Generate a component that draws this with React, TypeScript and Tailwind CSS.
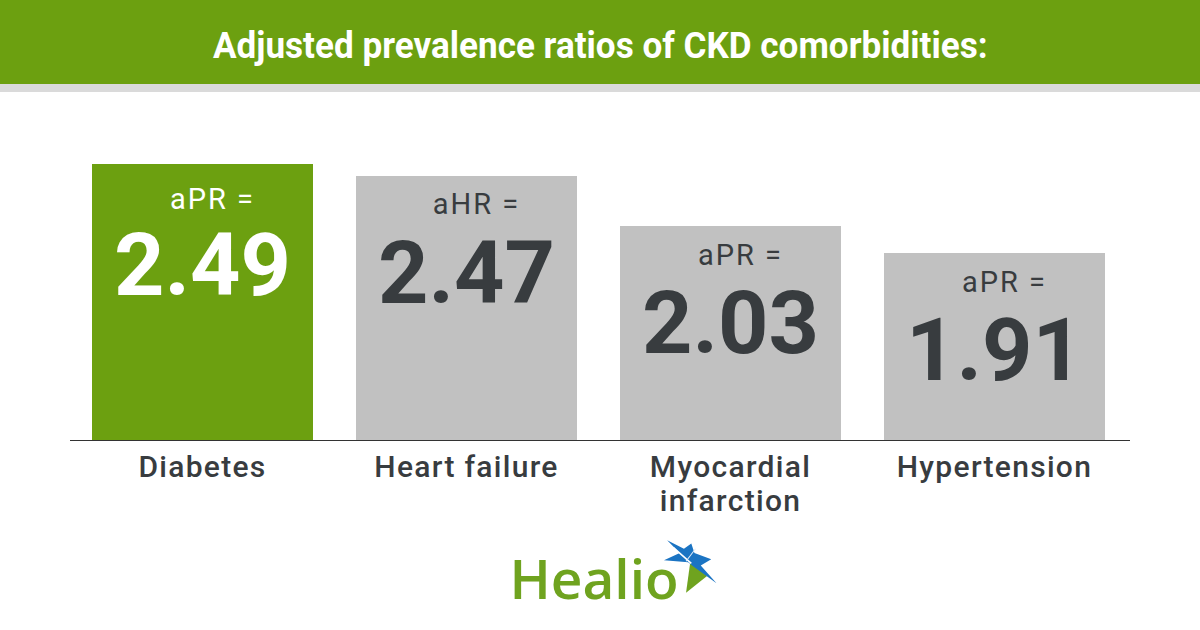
import React from "react";

type Bar = {
  label: string[];
  prefix: string;
  value: string;
  height: string;
  green?: boolean;
  pt: string;
  gap: string;
};

const bars: Bar[] = [
  { label: ["Diabetes"], prefix: "aPR =", value: "2.49", height: "h-[276px]", green: true, pt: "pt-[21px]", gap: "mt-[8px]" },
  { label: ["Heart failure"], prefix: "aHR =", value: "2.47", height: "h-[264px]", pt: "pt-[14px]", gap: "mt-[11px]" },
  { label: ["Myocardial", "infarction"], prefix: "aPR =", value: "2.03", height: "h-[214px]", pt: "pt-[15px]", gap: "mt-[10px]" },
  { label: ["Hypertension"], prefix: "aPR =", value: "1.91", height: "h-[187px]", pt: "pt-[15px]", gap: "mt-[10px]" },
];

function Star() {
  return (
    <svg className="absolute left-[139px] top-[-17px]" width="74" height="63" viewBox="650 535 70 60">
      <path d="M690 562 L686 591 L706 575 Z" fill="#6fa31f" />
      <path
        d="M665 560 L680 553 L668 541 L684 549 L691 544 L694 553 L710 559 L700 565 L715 582 L693 566 L688 562 Z"
        fill="#1b74c3"
      />
      <path d="M674 548 L691 563" stroke="#ffffff" strokeWidth="1.5" />
      <path d="M695 549 L686 561" stroke="#e3eef9" strokeWidth="1" />
    </svg>
  );
}

export default function App() {
  return (
    <div className="w-[1200px] h-[630px] bg-white overflow-hidden" style={{ fontFamily: "Roboto, 'Liberation Sans', sans-serif" }}>
      <div className="h-[84px] bg-[#6ca010] flex items-center justify-center pt-[7px]">
        <div className="text-white font-bold text-[36px] leading-[36px] whitespace-nowrap scale-x-[0.975]">
          Adjusted prevalence ratios of CKD comorbidities:
        </div>
      </div>
      <div className="h-[8px] bg-[#dadada]" />

      <div className="mt-[72px] h-[276px] flex items-end gap-[43px] pl-[92px]">
        {bars.map((b) => (
          <div
            key={b.value}
            className={`w-[221px] ${b.height} ${b.green ? "bg-[#6ca010] text-white" : "bg-[#c1c1c1] text-[#383c3f]"} flex flex-col items-center ${b.pt}`}
          >
            <div className="text-[29px] leading-[28px] tracking-[2px] pl-[20px] whitespace-nowrap">{b.prefix}</div>
            <div className={`text-[88px] leading-[88px] font-bold ${b.gap} whitespace-nowrap`}>{b.value}</div>
          </div>
        ))}
      </div>
      <div className="ml-[70px] w-[1060px] h-px bg-[#333333]" />

      <div className="h-[111px] flex gap-[43px] pl-[92px] pt-[9px]">
        {bars.map((b) => (
          <div key={b.value} className="w-[221px] text-center text-[30px] leading-[34px] font-medium tracking-[1.3px] text-[#383c3f]">
            {b.label.map((l) => (
              <div key={l} className="whitespace-nowrap">{l}</div>
            ))}
          </div>
        ))}
      </div>

      <div className="flex justify-center">
        <div className="relative -ml-[12px] -mt-[1px]">
          <div
            className="text-[55px] leading-[54px] text-[#6fa31f] font-semibold"
            style={{ fontFamily: "'Open Sans', 'Liberation Sans', sans-serif" }}
          >
            Healio
          </div>
          <Star />
        </div>
      </div>
    </div>
  );
}
